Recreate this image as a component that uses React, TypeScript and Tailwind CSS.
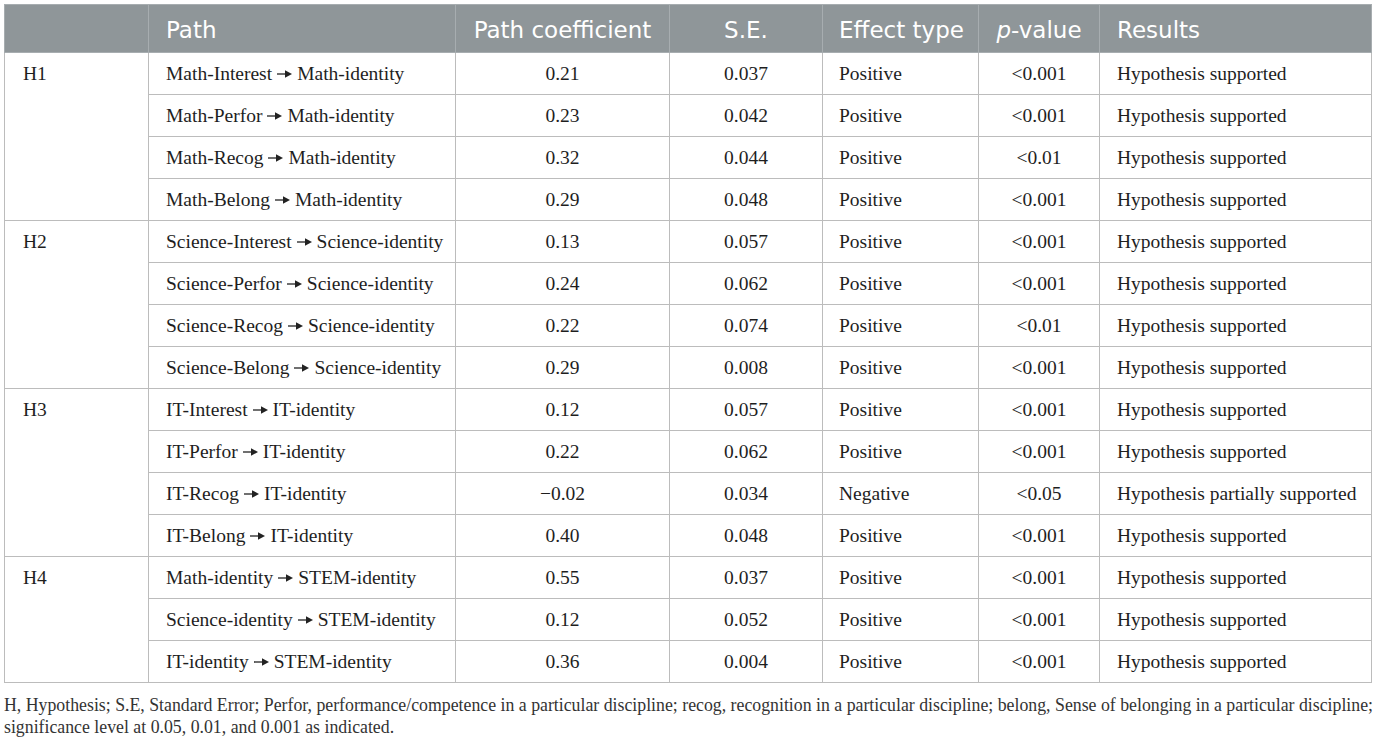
import React from "react";

type Row = { a: string; b: string; coef: string; se: string; eff: string; p: string; res: string };

const groups: { h: string; rows: Row[] }[] = [
  {
    h: "H1",
    rows: [
      { a: "Math-Interest", b: "Math-identity", coef: "0.21", se: "0.037", eff: "Positive", p: "<0.001", res: "Hypothesis supported" },
      { a: "Math-Perfor", b: "Math-identity", coef: "0.23", se: "0.042", eff: "Positive", p: "<0.001", res: "Hypothesis supported" },
      { a: "Math-Recog", b: "Math-identity", coef: "0.32", se: "0.044", eff: "Positive", p: "<0.01", res: "Hypothesis supported" },
      { a: "Math-Belong", b: "Math-identity", coef: "0.29", se: "0.048", eff: "Positive", p: "<0.001", res: "Hypothesis supported" },
    ],
  },
  {
    h: "H2",
    rows: [
      { a: "Science-Interest", b: "Science-identity", coef: "0.13", se: "0.057", eff: "Positive", p: "<0.001", res: "Hypothesis supported" },
      { a: "Science-Perfor", b: "Science-identity", coef: "0.24", se: "0.062", eff: "Positive", p: "<0.001", res: "Hypothesis supported" },
      { a: "Science-Recog", b: "Science-identity", coef: "0.22", se: "0.074", eff: "Positive", p: "<0.01", res: "Hypothesis supported" },
      { a: "Science-Belong", b: "Science-identity", coef: "0.29", se: "0.008", eff: "Positive", p: "<0.001", res: "Hypothesis supported" },
    ],
  },
  {
    h: "H3",
    rows: [
      { a: "IT-Interest", b: "IT-identity", coef: "0.12", se: "0.057", eff: "Positive", p: "<0.001", res: "Hypothesis supported" },
      { a: "IT-Perfor", b: "IT-identity", coef: "0.22", se: "0.062", eff: "Positive", p: "<0.001", res: "Hypothesis supported" },
      { a: "IT-Recog", b: "IT-identity", coef: "\u22120.02", se: "0.034", eff: "Negative", p: "<0.05", res: "Hypothesis partially supported" },
      { a: "IT-Belong", b: "IT-identity", coef: "0.40", se: "0.048", eff: "Positive", p: "<0.001", res: "Hypothesis supported" },
    ],
  },
  {
    h: "H4",
    rows: [
      { a: "Math-identity", b: "STEM-identity", coef: "0.55", se: "0.037", eff: "Positive", p: "<0.001", res: "Hypothesis supported" },
      { a: "Science-identity", b: "STEM-identity", coef: "0.12", se: "0.052", eff: "Positive", p: "<0.001", res: "Hypothesis supported" },
      { a: "IT-identity", b: "STEM-identity", coef: "0.36", se: "0.004", eff: "Positive", p: "<0.001", res: "Hypothesis supported" },
    ],
  },
];

const cell = "border border-[#bcbcbc] h-[42px] py-0 align-middle";
const th = "border border-[#a7adb0] font-normal pt-[3px]";

function Arrow() {
  return (
    <svg width="15" height="10" viewBox="0 0 15 10" className="inline-block mx-[5px] align-[1px]" aria-hidden="true">
      <line x1="0" y1="5" x2="9" y2="5" stroke="#222" strokeWidth="1.3" />
      <path d="M8 1.2 L15 5 L8 8.8 Z" fill="#222" />
    </svg>
  );
}

export default function App() {
  return (
    <div className="bg-white w-[1375px] h-[741px] pt-[4px] pl-[4px] font-['Liberation_Serif',serif] text-[#1e1e1e]">
      <table className="border-collapse table-fixed w-[1367px] border border-[#b0b0b0]">
        <colgroup>
          <col className="w-[144px]" />
          <col className="w-[307px]" />
          <col className="w-[214px]" />
          <col className="w-[153px]" />
          <col className="w-[156px]" />
          <col className="w-[121px]" />
          <col className="w-[272px]" />
        </colgroup>
        <thead>
          <tr className="bg-[#8f9699] text-white font-['DejaVu_Sans',sans-serif] text-[23px] leading-[28px]">
            <th className={th + " h-[48px] text-left pl-[17px]"}></th>
            <th className={th + " text-left pl-[17px]"}>Path</th>
            <th className={th + " text-center"}>Path coefficient</th>
            <th className={th + " text-center"}>S.E.</th>
            <th className={th + " text-left pl-[16px]"}>Effect type</th>
            <th className={th + " text-center"}>
              <span className="italic">p</span>-value
            </th>
            <th className={th + " text-left pl-[17px]"}>Results</th>
          </tr>
        </thead>
        <tbody className="text-[19.5px]">
          {groups.map((g) =>
            g.rows.map((r, i) => (
              <tr key={g.h + i}>
                {i === 0 && (
                  <td rowSpan={g.rows.length} className="border border-[#bcbcbc] align-top pl-[18px] pt-[10px] leading-[22px]">
                    {g.h}
                  </td>
                )}
                <td className={cell + " pl-[17px] whitespace-nowrap"}>
                  {r.a}
                  <Arrow />
                  {r.b}
                </td>
                <td className={cell + " text-center"}>{r.coef}</td>
                <td className={cell + " text-center"}>{r.se}</td>
                <td className={cell + " pl-[16px]"}>{r.eff}</td>
                <td className={cell + " text-center"}>{r.p}</td>
                <td className={cell + " pl-[17px] whitespace-nowrap"}>{r.res}</td>
              </tr>
            ))
          )}
        </tbody>
      </table>
      <p className="mt-[11px] text-[17.8px] leading-[22px] text-[#333] whitespace-nowrap">
        H, Hypothesis; S.E, Standard Error; Perfor, performance/competence in a particular discipline; recog, recognition in a particular discipline; belong, Sense of belonging in a particular discipline;
        <br />
        significance level at 0.05, 0.01, and 0.001 as indicated.
      </p>
    </div>
  );
}
